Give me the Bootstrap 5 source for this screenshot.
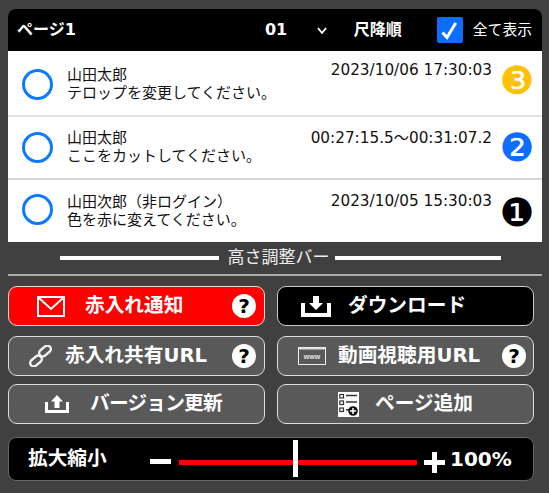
<!DOCTYPE html>
<html lang="ja">
<head>
<meta charset="utf-8">
<title>赤入れ</title>
<link href="https://cdn.jsdelivr.net/npm/bootstrap@5.3.0/dist/css/bootstrap.min.css" rel="stylesheet">
<style>
html,body{height:100%;}
body{background:#404040;color:#fff;font-family:"DejaVu Sans","Noto Sans CJK JP",sans-serif;overflow:hidden;padding:9px 7px 0 8px;}
.panel-head{background:#000;height:42px;border-radius:8px 8px 0 0;padding:0 10px 0 9px;font-weight:700;font-size:16px;}
.head-title{width:248px;}
.head-page{width:52px;}
.head-chev{width:37px;}
.head-sort{width:83px;}
.head-check.form-check-input{width:26px;height:26px;margin:0 10px 0 0;border-radius:2px;border:0;flex:none;background-size:26px 26px;background-image:url("data:image/svg+xml,%3csvg xmlns='http://www.w3.org/2000/svg' viewBox='0 0 26 26'%3e%3cpath d='M5.500 15.500 10 20.500 18.700 6' fill='none' stroke='%23fff' stroke-width='3'/%3e%3c/svg%3e");}
.head-all{font-weight:400;font-size:14.8px;white-space:nowrap;}
.msg-list{background:#fff;color:#111;}
.msg-row{height:66px;border-bottom:2px solid #e4e4e4;padding:0 10px 0 14px;}
.msg-row:nth-child(2){height:63px;border-bottom-color:#d5d5d5;}
.msg-row:last-child{border-bottom:0;height:62px;}
.ring{width:31px;height:31px;border:3.400px solid #0d7bff;border-radius:50%;flex:none;margin:18px 14px 0 0;}
.msg-row:nth-child(2) .ring{margin-top:15px;}
.msg-row:last-child .ring{margin-top:14px;}
.msg-body{font-size:15px;line-height:18px;flex:1 1 auto;min-width:0;margin-top:15px;white-space:nowrap;}
.msg-row:nth-child(2) .msg-body{margin-top:12px;}
.msg-row:last-child .msg-body{margin-top:13px;}
.msg-time{font-size:15.250px;line-height:18px;white-space:nowrap;margin:10px 10px 0 0;}
.msg-row:nth-child(2) .msg-time{margin-top:12px;}
.msg-row:last-child .msg-time{margin-top:12px;}
.num{font-size:39px;line-height:34px;flex:none;width:30px;display:flex;justify-content:center;font-family:"DejaVu Sans",sans-serif;margin-top:13px;}
.msg-row:nth-child(2) .num{margin-top:14px;}
.msg-row:last-child .num{margin-top:16px;}
.num-3{color:#ffc107;}.num-2{color:#0d6efd;}.num-1{color:#000;}
.resize-bar{height:32px;padding:0 41px 0 52px;font-size:17px;color:#eee;}
.resize-line{height:4px;background:#fff;}
.resize-l{width:159px;}
.resize-r{width:166px;}
.resize-text{width:116px;text-align:center;white-space:nowrap;padding-left:3px;}
.sep{height:2px;background:#aaa;margin-bottom:10px;}
.btn-grid{display:grid;grid-template-columns:257px 257px;column-gap:12px;row-gap:10px;}
.act-btn{height:40px;border:1px solid #ddd;border-radius:9px;background:#595959;color:#fff;font-weight:700;font-size:19.700px;padding:0;display:flex;align-items:center;position:relative;white-space:nowrap;}
.act-btn:hover{background:#595959;color:#fff;border-color:#ddd;}
.act-red,.act-red:hover{background:#f00;}
.act-black,.act-black:hover{background:#000;border-color:#ccc;}
.row-tight{margin-top:-2px;}
.ic{flex:none;display:block;}
.help{position:absolute;top:7px;width:24px;height:24px;border-radius:50%;background:#fff;color:#000;font-size:20px;line-height:24px;text-align:center;font-weight:700;}
.lbl-tight{letter-spacing:-.8px;}
.zoom-bar{background:#000;height:44px;border:1px solid #666;border-radius:8px;margin-top:13px;width:526px;font-weight:700;position:relative;}
.zoom-label{font-size:19.700px;margin:0 41px 0 19px;width:81px;white-space:nowrap;}
.zoom-track{width:238px;height:5px;background:#f00;position:relative;margin:6px 8px 0;}
.zoom-thumb{position:absolute;left:114px;top:-20px;width:5px;height:37px;background:#fff;}
.zoom-sign{width:21px;flex:none;margin-top:4px;}
.zoom-plus{margin-top:6px;margin-left:-1px;}
.zoom-val{font-size:20px;margin:0 0 0 5px;}
</style>
</head>
<body>
<div class="d-flex align-items-center panel-head">
  <span class="head-title">ページ1</span>
  <span class="head-page">01</span>
  <span class="head-chev"><svg width="10" height="7" viewBox="0 0 10 7" class="ic"><path d="M1 1l4 5 4-5" fill="none" stroke="#fff" stroke-width="1.800"/></svg></span>
  <span class="head-sort">尺降順</span>
  <input class="form-check-input head-check" type="checkbox" checked aria-label="全て表示">
  <span class="head-all">全て表示</span>
</div>
<div class="msg-list">
  <div class="d-flex msg-row">
    <div class="ring"></div>
    <div class="msg-body">山田太郎<br>テロップを変更してください。</div>
    <div class="msg-time">2023/10/06 17:30:03</div>
    <div class="num num-3">❸</div>
  </div>
  <div class="d-flex msg-row">
    <div class="ring"></div>
    <div class="msg-body">山田太郎<br>ここをカットしてください。</div>
    <div class="msg-time">00:27:15.5～00:31:07.2</div>
    <div class="num num-2">❷</div>
  </div>
  <div class="d-flex msg-row">
    <div class="ring"></div>
    <div class="msg-body">山田次郎（非ログイン）<br>色を赤に変えてください。</div>
    <div class="msg-time">2023/10/05 15:30:03</div>
    <div class="num num-1">❶</div>
  </div>
</div>
<div class="d-flex align-items-center resize-bar">
  <span class="resize-line resize-l"></span><span class="resize-text">高さ調整バー</span><span class="resize-line resize-r"></span>
</div>
<div class="sep"></div>
<div class="btn-grid">
  <button class="btn act-btn act-red" type="button">
    <svg class="ic" style="margin-left:28px" width="28" height="21" viewBox="0 0 28 21"><rect x="1" y="1" width="26" height="19" fill="none" stroke="#fff" stroke-width="2"/><path d="M2 2 14 13 26 2" fill="none" stroke="#fff" stroke-width="2"/></svg>
    <span style="margin-left:20px">赤入れ通知</span><span class="help" style="left:223px">?</span>
  </button>
  <button class="btn act-btn act-black" type="button">
    <svg class="ic" style="margin-left:23px" width="30" height="21" viewBox="0 0 30 21"><path d="M2 7v12h26V7" fill="none" stroke="#fff" stroke-width="4"/><path d="M12 0h6v7h4l-7 7-7-7h4z" fill="#fff"/></svg>
    <span style="margin-left:17px">ダウンロード</span>
  </button>
  <button class="btn act-btn" type="button">
    <svg class="ic" style="margin-left:20px" width="23" height="22" viewBox="0 0 23 22"><g fill="none" stroke="#f2f2f2" stroke-width="2.400"><rect x="9.500" y="2.500" width="13" height="7" rx="3.500" transform="rotate(-40 16 6)"/><rect x="0.500" y="12.500" width="13" height="7" rx="3.500" transform="rotate(-40 7 16)"/></g></svg>
    <span style="margin-left:13px">赤入れ共有URL</span><span class="help" style="left:223px">?</span>
  </button>
  <button class="btn act-btn" type="button">
    <svg class="ic" style="margin-left:20px" width="28" height="18" viewBox="0 0 28 18"><rect x="0.500" y="0.500" width="27" height="17" fill="none" stroke="#eee"/><path d="M1 1h26v1.500H1z" fill="#ddd"/><text x="14" y="12" text-anchor="middle" font-size="7" font-weight="700" fill="#e8e8e8" font-family="Liberation Sans,sans-serif">www</text></svg>
    <span style="margin-left:12px">動画視聴用URL</span><span class="help" style="left:224px">?</span>
  </button>
  <button class="btn act-btn row-tight" type="button">
    <svg class="ic" style="margin-left:36px" width="24" height="18" viewBox="0 0 24 18"><path d="M1.500 7v9.500h21V7" fill="none" stroke="#fff" stroke-width="3"/><path d="M9.500 13V6.500H6l6-6.500 6 6.500h-3.500V13z" fill="#fff"/></svg>
    <span class="lbl-tight" style="margin-left:21px">バージョン更新</span>
  </button>
  <button class="btn act-btn row-tight" type="button">
    <svg class="ic" style="margin-left:60px" width="21" height="25" viewBox="0 0 21 25"><path d="M0 0h21v25H0z" fill="#fff"/><g fill="none" stroke="#333" stroke-width="1.200"><rect x="1.800" y="2.500" width="3.700" height="3.500"/><rect x="1.800" y="9" width="3.700" height="3.500"/><rect x="1.800" y="16" width="3.700" height="3.500"/></g><path d="M8 3.500h11M8 10h11M8 17.800h6" stroke="#333" stroke-width="1.500"/><circle cx="15" cy="19" r="4.800" fill="#111"/><path d="M15 16v6M12 19h6" stroke="#fff" stroke-width="1.500"/></svg>
    <span style="margin-left:16px">ページ追加</span>
  </button>
</div>
<div class="d-flex align-items-center zoom-bar">
  <span class="zoom-label">拡大縮小</span>
  <svg class="ic zoom-sign" height="5" viewBox="0 0 21 5"><path d="M0 0h21v5H0z" fill="#fff"/></svg>
  <div class="zoom-track"><div class="zoom-thumb"></div></div>
  <svg class="ic zoom-sign zoom-plus" height="21" viewBox="0 0 21 21"><path d="M8 0h5v8h8v5h-8v8H8v-8H0V8h8z" fill="#fff"/></svg>
  <span class="zoom-val">100%</span>
</div>
<script src="https://cdn.jsdelivr.net/npm/bootstrap@5.3.0/dist/js/bootstrap.bundle.min.js"></script>
</body>
</html>
